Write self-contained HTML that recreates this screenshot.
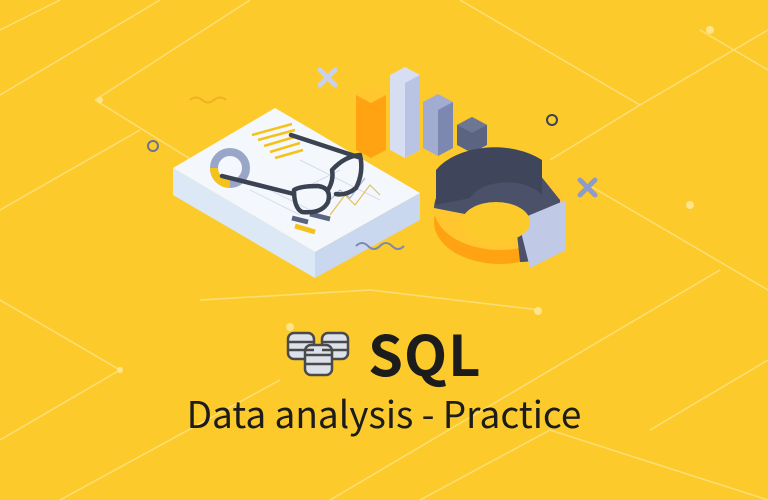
<!DOCTYPE html>
<html><head><meta charset="utf-8"><style>
html,body{margin:0;padding:0}
body{width:768px;height:500px;overflow:hidden;background:#fccb2b;position:relative;font-family:"Noto Sans CJK KR","Liberation Sans",sans-serif}
svg{position:absolute;left:0;top:0}
.sql{position:absolute;left:368px;top:318px;font-size:56px;font-weight:bold;color:#1c1c1c;line-height:70px;letter-spacing:1px}
.sub{position:absolute;left:0;width:768px;text-align:center;top:386px;font-size:37px;color:#1c1c1c;line-height:52px}
</style></head><body>
<svg width="768" height="500" viewBox="0 0 768 500">
<g stroke="#fde38a" stroke-width="1.5" fill="none" opacity="0.8">
<path d="M0 95 L160 0"/><path d="M95 100 L250 0"/><path d="M95 100 L200 165"/>
<path d="M0 210 L140 130"/><path d="M0 300 L120 370 L0 440"/><path d="M60 500 L280 380"/>
<path d="M460 0 L640 105 L768 30"/><path d="M640 105 L550 160"/><path d="M580 180 L768 290"/>
<path d="M330 500 L720 270"/><path d="M420 500 L550 430 L768 500"/><path d="M700 30 L768 70"/>
<path d="M200 300 L370 290 L540 310"/><path d="M650 430 L768 360"/><path d="M0 30 L60 0"/>
</g>
<g fill="#fde38a"><circle cx="710" cy="30" r="4"/><circle cx="690" cy="205" r="4"/><circle cx="538" cy="311" r="4"/><circle cx="290" cy="327" r="4"/><circle cx="120" cy="370" r="3"/><circle cx="100" cy="100" r="3"/></g>
<!-- paper -->
<polygon points="173,168 275,108 420,193 315,252" fill="#f4f8fd"/>
<polygon points="173,168 315,252 315,278 173,195" fill="#dde8f7"/>
<polygon points="315,252 420,193 420,220 315,278" fill="#c9d7ef"/>
<g stroke="#f5c21a" stroke-width="2.5"><path d="M252 135 L292 124"/><path d="M258 140 L295 130"/><path d="M264 146 L298 136"/><path d="M270 152 L300 143"/><path d="M275 158 L303 150"/></g>
<g stroke="#d5dcea" stroke-width="1" fill="none"><path d="M250 190 L300 215"/><path d="M260 185 L330 220"/><path d="M300 160 L380 200"/><path d="M340 170 L300 190"/></g>
<path d="M330 215 L345 195 L355 205 L370 185 L380 195" stroke="#e2c060" stroke-width="1.2" fill="none"/>
<path d="M325 205 L340 190 L350 198 L365 178" stroke="#a8b2d4" stroke-width="1.2" fill="none"/>
<circle cx="230" cy="168" r="16" fill="none" stroke="#9aa6c8" stroke-width="8"/>
<path d="M214 168 A16 16 0 0 0 230 184" fill="none" stroke="#f5c21a" stroke-width="8"/>
<g stroke="#5a6380" stroke-width="5"><path d="M292 218 L308 222"/><path d="M310 214 L330 219"/></g>
<path d="M295 226 L315 232" stroke="#f5c21a" stroke-width="5"/>
<!-- glasses -->
<g stroke="#3b4252" stroke-width="4.5" fill="none" stroke-linecap="round" stroke-linejoin="round">
<path d="M291 135 L358 157"/><path d="M222 176 L294 194"/>
<path d="M294 190 Q300 186 318 186 Q332 188 328 202 Q322 214 302 212 Q294 208 294 190 Z"/>
<path d="M328 190 Q334 180 332 170 Q345 156 360 155 Q364 172 356 188 Q346 196 336 194"/>
</g>
<!-- bars -->
<polygon points="356,95 371,87 386,95 386,150 371,158 356,150" fill="#ffa312"/><polygon points="356,95 371,87 386,95 371,103" fill="#ffc630"/>
<polygon points="390,75 405,67 420,75 420,150 405,158 390,150" fill="#d8def2"/><polygon points="405,83 420,75 420,150 405,158" fill="#b9c3e3"/>
<polygon points="423,102 438,94 453,102 453,148 438,156 423,148" fill="#a2acd0"/><polygon points="438,110 453,102 453,148 438,156" fill="#7d88b0"/>
<polygon points="457,125 472,117 487,125 487,145 472,153 457,145" fill="#5b6480"/><polygon points="457,125 472,117 487,125 472,133" fill="#6d7693"/>
<!-- donut -->
<ellipse cx="500" cy="222" rx="66" ry="42" fill="#ffa312"/>
<ellipse cx="500" cy="208" rx="66" ry="42" fill="#ffc630"/>
<path d="M434 208 A66 42 0 0 1 540 175 L560 200 L560 250 Q540 262 520 262 L515 215 Q490 195 470 215 Z" fill="#4a5168"/>
<path d="M518 220 L566 200 L566 250 L530 268 Z" fill="#c0c9e6"/>
<path d="M436 170 A66 42 0 0 1 542 160 L542 195 A40 25 0 0 0 470 198 L436 205 Z" fill="#3f465c"/>
<ellipse cx="496" cy="222" rx="34" ry="20" fill="#fccb2b"/>
<!-- deco -->
<g stroke="#c8d0ec" stroke-width="5" stroke-linecap="round"><path d="M320 70 L335 85"/><path d="M335 70 L320 85"/></g>
<g stroke="#8f9bc8" stroke-width="5" stroke-linecap="round"><path d="M580 180 L595 195"/><path d="M595 180 L580 195"/></g>
<circle cx="552" cy="120" r="5" fill="none" stroke="#3b4252" stroke-width="2"/>
<circle cx="153" cy="146" r="5" fill="none" stroke="#6c7390" stroke-width="2"/>
<path d="M356 246 q6 -6 12 0 t12 0 t12 0 t12 0" stroke="#7d88b0" stroke-width="2" fill="none"/>
<path d="M190 100 q6 -5 12 0 t12 0 t12 0" stroke="#f0b020" stroke-width="2" fill="none"/>
<!-- db icon -->
<g stroke="#4a4a4a" stroke-width="2.5" fill="#dde2ea">
<rect x="288" y="333" width="26" height="26" rx="6"/><rect x="322" y="333" width="26" height="26" rx="6"/><rect x="305" y="345" width="27" height="30" rx="6"/>
<path d="M288 342 h26 M288 350 h26 M322 342 h26 M322 350 h26 M305 355 h27 M305 364 h27" fill="none"/>
</g>
</svg>
<div class="sql">SQL</div>
<div class="sub">Data analysis - Practice</div>
</body></html>
